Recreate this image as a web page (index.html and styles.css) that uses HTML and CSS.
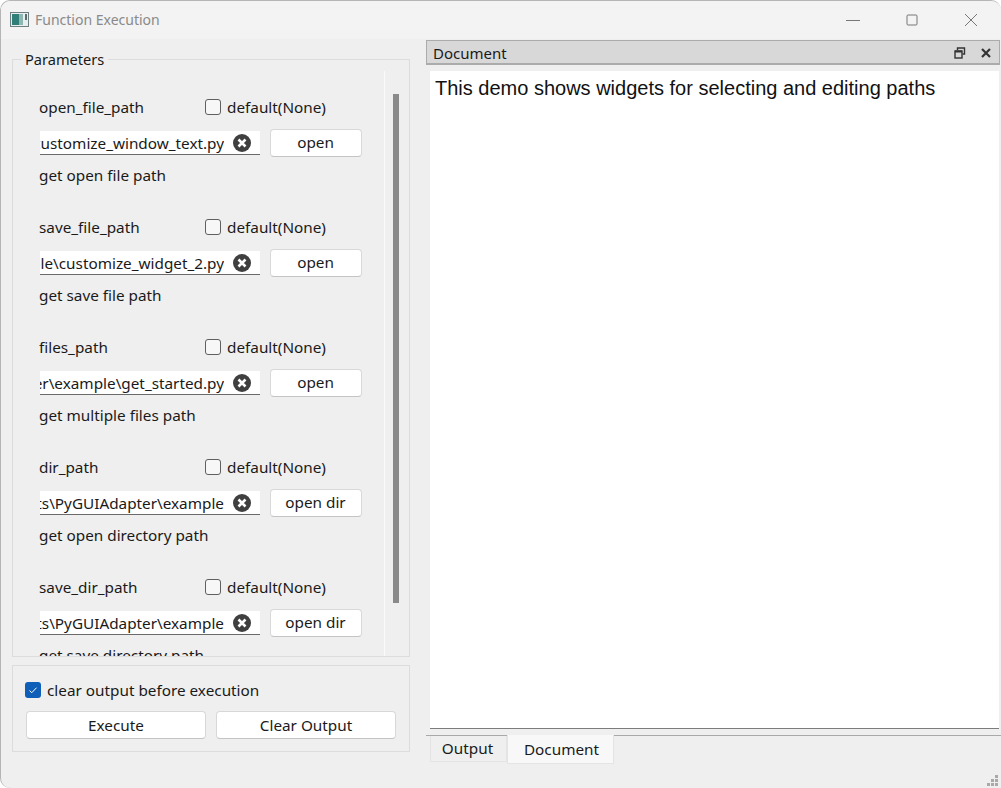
FILE: index.html
```html
<!DOCTYPE html>
<html lang="en">
<head>
    <meta charset="UTF-8">
    <title>Function Execution</title>
    <link rel="stylesheet" href="styles.css">
</head>
<body>
    <div class="window">
        <div class="titlebar">
            <svg class="app-icon" width="19" height="15" viewBox="0 0 19 15">
                <rect x="0.5" y="0.5" width="18" height="14" fill="#e8eeee" stroke="#6d7f80"/>
                <rect x="2" y="2" width="11" height="11" fill="#2f7f78"/>
                <rect x="9" y="2" width="4" height="11" fill="#8fb7b2"/>
                <rect x="15" y="2" width="2" height="6" fill="#5a6c6e"/>
            </svg>
            <span class="title">Function Execution</span>
            <div class="win-buttons">
                <svg width="16" height="16" viewBox="0 0 16 16"><path d="M1 8.5h14" stroke="#777" fill="none"/></svg>
                <svg width="16" height="16" viewBox="0 0 16 16"><rect x="3" y="3" width="10" height="10" rx="1" stroke="#777" fill="none"/></svg>
                <svg width="16" height="16" viewBox="0 0 16 16"><path d="M2 2l12 12M14 2L2 14" stroke="#777" fill="none"/></svg>
            </div>
        </div>
        <div class="main">
            <div class="left">
                <fieldset class="params">
                    <legend>Parameters</legend>
                    <div class="scroll-area">
                        <div class="param-list">
                            <div class="param">
                                <div class="param-top"><span class="param-name">open_file_path</span><span class="check"></span><span>default(None)</span></div>
                                <div class="param-edit">
                                    <div class="path"><span class="path-text"><span>D:\projects\PyGUIAdapter\example\customize_window_text.py</span></span><svg class="clear" width="18" height="18" viewBox="0 0 18 18"><circle cx="9" cy="9" r="9" fill="#3f3f3f"/><path d="M5.5 5.5l7 7M12.5 5.5l-7 7" stroke="#fff" stroke-width="2.6"/></svg></div>
                                    <button class="btn pick">open</button>
                                </div>
                                <div class="param-desc">get open file path</div>
                            </div>
                            <div class="param">
                                <div class="param-top"><span class="param-name">save_file_path</span><span class="check"></span><span>default(None)</span></div>
                                <div class="param-edit">
                                    <div class="path"><span class="path-text"><span>D:\projects\PyGUIAdapter\example\customize_widget_2.py</span></span><svg class="clear" width="18" height="18" viewBox="0 0 18 18"><circle cx="9" cy="9" r="9" fill="#3f3f3f"/><path d="M5.5 5.5l7 7M12.5 5.5l-7 7" stroke="#fff" stroke-width="2.6"/></svg></div>
                                    <button class="btn pick">open</button>
                                </div>
                                <div class="param-desc">get save file path</div>
                            </div>
                            <div class="param">
                                <div class="param-top"><span class="param-name">files_path</span><span class="check"></span><span>default(None)</span></div>
                                <div class="param-edit">
                                    <div class="path"><span class="path-text"><span>D:\projects\PyGUIAdapter\example\get_started.py</span></span><svg class="clear" width="18" height="18" viewBox="0 0 18 18"><circle cx="9" cy="9" r="9" fill="#3f3f3f"/><path d="M5.5 5.5l7 7M12.5 5.5l-7 7" stroke="#fff" stroke-width="2.6"/></svg></div>
                                    <button class="btn pick">open</button>
                                </div>
                                <div class="param-desc">get multiple files path</div>
                            </div>
                            <div class="param">
                                <div class="param-top"><span class="param-name">dir_path</span><span class="check"></span><span>default(None)</span></div>
                                <div class="param-edit">
                                    <div class="path"><span class="path-text"><span>D:\projects\PyGUIAdapter\example</span></span><svg class="clear" width="18" height="18" viewBox="0 0 18 18"><circle cx="9" cy="9" r="9" fill="#3f3f3f"/><path d="M5.5 5.5l7 7M12.5 5.5l-7 7" stroke="#fff" stroke-width="2.6"/></svg></div>
                                    <button class="btn pick">open dir</button>
                                </div>
                                <div class="param-desc">get open directory path</div>
                            </div>
                            <div class="param">
                                <div class="param-top"><span class="param-name">save_dir_path</span><span class="check"></span><span>default(None)</span></div>
                                <div class="param-edit">
                                    <div class="path"><span class="path-text"><span>D:\projects\PyGUIAdapter\example</span></span><svg class="clear" width="18" height="18" viewBox="0 0 18 18"><circle cx="9" cy="9" r="9" fill="#3f3f3f"/><path d="M5.5 5.5l7 7M12.5 5.5l-7 7" stroke="#fff" stroke-width="2.6"/></svg></div>
                                    <button class="btn pick">open dir</button>
                                </div>
                                <div class="param-desc">get save directory path</div>
                            </div>
                        </div>
                        <div class="scrollbar"><div class="thumb"></div></div>
                    </div>
                </fieldset>
                <div class="actions">
                    <div class="clear-row">
                        <svg class="checked" width="16" height="16" viewBox="0 0 16 16"><rect width="16" height="16" rx="3" fill="#0f5fb8"/><path d="M4.5 8.5l2.3 2.2 4.7-5" stroke="#fff" fill="none"/></svg>
                        <span>clear output before execution</span>
                    </div>
                    <div class="action-buttons">
                        <button class="btn wide">Execute</button>
                        <button class="btn wide">Clear Output</button>
                    </div>
                </div>
            </div>
            <div class="right">
                <div class="dock-title">
                    <span>Document</span>
                    <div class="dock-buttons">
                        <svg width="12" height="12" viewBox="0 0 12 12"><path d="M3.5 3V1h7v6H8.5" fill="none" stroke="#333" stroke-width="1.4"/><rect x="1" y="4" width="7" height="7" fill="none" stroke="#333" stroke-width="1.4"/><path d="M1 4.5h7" stroke="#333" stroke-width="2"/></svg>
                        <svg width="12" height="12" viewBox="0 0 12 12"><path d="M2 2l8 8M10 2l-8 8" stroke="#333" stroke-width="2.2"/></svg>
                    </div>
                </div>
                <div class="doc-body">This demo shows widgets for selecting and editing paths</div>
                <div class="tabs">
                    <div class="tab">Output</div>
                    <div class="tab tab-active">Document</div>
                </div>
                <svg class="grip" width="12" height="12" viewBox="0 0 12 12" fill="#a9a9a9"><rect x="8" y="0" width="3" height="3"/><rect x="4" y="4" width="3" height="3"/><rect x="8" y="4" width="3" height="3"/><rect x="0" y="8" width="3" height="3"/><rect x="4" y="8" width="3" height="3"/><rect x="8" y="8" width="3" height="3"/></svg>
            </div>
        </div>
    </div>
</body>
</html>
```

FILE: styles.css
```css
* {
    box-sizing: border-box;
}
html, body {
    margin: 0;
    padding: 0;
    background: #fff;
}
body {
    font-family: 'Noto Sans', sans-serif;
    font-size: 15.3px;
    color: #1a1a1a;
}
.window {
    width: 1001px;
    height: 788px;
    background: #efefef;
    border: 1px solid #b5b5b5;
    border-right: none;
    border-bottom: none;
    border-radius: 10px 10px 0 10px;
    display: flex;
    flex-direction: column;
    overflow: hidden;
}
.titlebar {
    height: 38px;
    flex: none;
    background: #f3f3f3;
    display: flex;
    align-items: center;
    padding: 0 0 1px 9px;
}
.app-icon {
    margin-right: 6px;
}
.title {
    color: #8a8a8a;
    font-size: 14px;
}
.win-buttons {
    margin-left: auto;
    display: flex;
    gap: 43px;
    padding-right: 22px;
}
.main {
    flex: 1;
    display: flex;
    min-height: 0;
}
.left {
    width: 425px;
    flex: none;
    padding: 10px 16px 0 11px;
}
.params {
    margin: 0;
    padding: 0;
    height: 608px;
    border: 1px solid #dcdcdc;
    min-width: 0;
}
.params legend {
    margin-left: 8px;
    padding: 0 4px;
    line-height: 20px;
    font-size: 14.6px;
}
.scroll-area {
    display: flex;
    height: 585px;
    margin-top: 2px;
    overflow: hidden;
}
.param-list {
    width: 372px;
    flex: none;
    border-right: 1px solid #fafafa;
    padding: 24px 0 0 26px;
}
.param {
    height: 120px;
}
.param-top {
    display: flex;
    align-items: center;
    height: 24px;
}
.param-name {
    width: 166px;
}
.check {
    width: 16px;
    height: 16px;
    border: 1px solid #5f5f5f;
    border-radius: 3px;
    background: #f7f7f7;
    margin-right: 6px;
}
.param-edit {
    display: flex;
    align-items: center;
    margin-top: 10px;
    height: 28px;
}
.path {
    width: 220px;
    height: 24px;
    margin-left: 1px;
    margin-right: 10px;
    background: #fff;
    border-bottom: 1px solid #6a6a6a;
    display: flex;
    align-items: center;
}
.path-text {
    flex: 1;
    min-width: 0;
    overflow: hidden;
    display: flex;
    justify-content: flex-end;
    white-space: nowrap;
}
.path-text span {
    flex: none;
}
.clear {
    margin: 0 9px;
    flex: none;
}
.btn {
    font-family: inherit;
    font-size: 15.3px;
    color: #1a1a1a;
    background: #fff;
    border: 1px solid #d8d8d8;
    border-bottom-color: #c4c4c4;
    border-radius: 4px;
    padding: 0 1px 2px 0;
}
.pick {
    width: 92px;
    height: 28px;
}
.param-desc {
    margin-top: 7px;
    line-height: 22px;
}
.scrollbar {
    flex: 1;
    padding: 23px 0 0 8px;
}
.thumb {
    width: 6px;
    height: 509px;
    background: #8a8a8a;
}
.actions {
    margin-top: 8px;
    height: 87px;
    border: 1px solid #dcdcdc;
    padding: 13px 13px 0 13px;
}
.clear-row {
    display: flex;
    align-items: center;
    gap: 6px;
    height: 22px;
    margin-left: -1px;
}
.action-buttons {
    display: flex;
    gap: 10px;
    margin-top: 10px;
}
.wide {
    width: 180px;
    height: 28px;
    padding: 0;
}
.right {
    flex: 1;
    display: flex;
    flex-direction: column;
    position: relative;
    min-width: 0;
}
.dock-title {
    height: 25px;
    margin-top: 1px;
    background: #d8d8d8;
    border: 1px solid #ababab;
    border-bottom-width: 2px;
    margin-right: 1px;
    display: flex;
    align-items: center;
    padding: 1px 7px 0 6px;
    font-size: 15px;
}
.dock-buttons {
    margin-left: auto;
    display: flex;
    gap: 14px;
}
.doc-body {
    margin: 6px 2px 0 4px;
    height: 658px;
    background: #fff;
    border-bottom: 1px solid #7c7c7c;
    font-family: 'Liberation Sans', sans-serif;
    font-size: 20px;
    color: #111;
    padding: 6px 5px;
}
.tabs {
    margin-top: 6px;
    border-top: 1px solid #a9a9a9;
    display: flex;
    padding-left: 4px;
    height: 30px;
    align-items: flex-start;
}
.tab {
    height: 26px;
    width: 77px;
    text-align: center;
    line-height: 24px;
    border: 1px solid #e4e4e4;
    border-top: none;
    padding-right: 2px;
}
.tab-active {
    width: 107px;
    height: 29px;
    margin-top: -1px;
    line-height: 28px;
    background: #f8f8f8;
    padding: 0 0 0 2px;
}
.grip {
    position: absolute;
    right: 2px;
    bottom: 1px;
}
```
